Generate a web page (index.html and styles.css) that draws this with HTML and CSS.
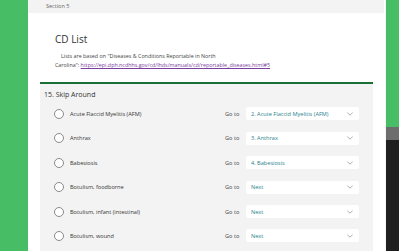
FILE: index.html
```html
<!DOCTYPE html>
<html>
<head>
    <title>CD List - Skip Around</title>
    <link rel="stylesheet" href="styles.css">
</head>
<body>
    <div class="page">
        <div class="rail"></div>

        <main class="form">
            <div class="section-bar">Section 5</div>

            <div class="intro">
                <h1 class="intro-title">CD List</h1>
                <p class="intro-text">
                    <span class="indent">Lists are based on "Diseases &amp; Conditions Reportable in North</span><br>
                    Carolina": <a href="#">https://epi.dph.ncdhhs.gov/cd/lhds/manuals/cd/reportable_diseases.html#5</a>
                </p>
            </div>

            <div class="question">
                <div class="q-title">15. Skip Around</div>

                <div class="option">
                    <span class="radio"></span>
                    <span class="label">Acute Flaccid Myelitis (AFM)</span>
                    <span class="goto">Go to</span>
                    <div class="select"><span>2. Acute Flaccid Myelitis (AFM)</span><svg class="chev" viewBox="0 0 8 5"><path d="M0.5 0.8 L4 4 L7.5 0.8"/></svg></div>
                </div>
                <div class="option">
                    <span class="radio"></span>
                    <span class="label">Anthrax</span>
                    <span class="goto">Go to</span>
                    <div class="select"><span>3. Anthrax</span><svg class="chev" viewBox="0 0 8 5"><path d="M0.5 0.8 L4 4 L7.5 0.8"/></svg></div>
                </div>
                <div class="option">
                    <span class="radio"></span>
                    <span class="label">Babesiosis</span>
                    <span class="goto">Go to</span>
                    <div class="select"><span>4. Babesiosis</span><svg class="chev" viewBox="0 0 8 5"><path d="M0.5 0.8 L4 4 L7.5 0.8"/></svg></div>
                </div>
                <div class="option">
                    <span class="radio"></span>
                    <span class="label">Botulism, foodborne</span>
                    <span class="goto">Go to</span>
                    <div class="select"><span>Next</span><svg class="chev" viewBox="0 0 8 5"><path d="M0.5 0.8 L4 4 L7.5 0.8"/></svg></div>
                </div>
                <div class="option">
                    <span class="radio"></span>
                    <span class="label">Botulism, infant (intestinal)</span>
                    <span class="goto">Go to</span>
                    <div class="select"><span>Next</span><svg class="chev" viewBox="0 0 8 5"><path d="M0.5 0.8 L4 4 L7.5 0.8"/></svg></div>
                </div>
                <div class="option">
                    <span class="radio"></span>
                    <span class="label">Botulism, wound</span>
                    <span class="goto">Go to</span>
                    <div class="select"><span>Next</span><svg class="chev" viewBox="0 0 8 5"><path d="M0.5 0.8 L4 4 L7.5 0.8"/></svg></div>
                </div>
            </div>
        </main>

        <div class="side">
            <div class="side-green"></div>
            <div class="side-gray"></div>
            <div class="side-dark"></div>
        </div>
    </div>
</body>
</html>
```

FILE: styles.css
```css
html, body {
    margin: 0;
    padding: 0;
}

body {
    font-family: "Open Sans", "Noto Sans", sans-serif;
    color: #333;
    overflow: hidden;
}

.page {
    display: flex;
    height: 251px;
    overflow: hidden;
}

.rail {
    width: 28px;
    background: #47be65;
    flex-shrink: 0;
}

.form {
    width: 357px;
    flex-shrink: 0;
    background: #fff;
    display: flex;
    flex-direction: column;
}

.section-bar {
    height: 13px;
    margin-right: 1px;
    background: #f3f3f3;
    font-size: 5.5px;
    line-height: 13px;
    color: #666;
    padding-left: 18px;
}

.intro {
    padding: 19px 0 0 27px;
    height: 50px;
}

.intro-title {
    margin: 0;
    font-size: 10px;
    font-weight: normal;
    line-height: 15px;
    color: #333;
}

.intro-text {
    margin: 5px 0 0;
    font-size: 5.35px;
    line-height: 9px;
    color: #444;
}

.indent {
    padding-left: 6px;
}

.intro-text a {
    color: #7a3e9d;
    text-decoration: underline;
}

.question {
    margin: 0 12px 0 12px;
    border-top: 2px solid #1b6e34;
    background: #f3f3f3;
    flex: 1;
    padding: 6px 0 0 4px;
}

.q-title {
    font-size: 7px;
    line-height: 10px;
    color: #333;
    margin-bottom: 1.8px;
}

.option {
    display: flex;
    align-items: center;
    height: 24.4px;
    font-size: 5.6px;
}

.radio {
    width: 8px;
    height: 8px;
    border: 1px solid #8a8a8a;
    border-radius: 50%;
    background: #fff;
    margin-left: 10px;
    flex-shrink: 0;
}

.label {
    margin-left: 6px;
    width: 155px;
    color: #333;
}

.goto {
    width: 21px;
    color: #444;
}

.select {
    width: 113px;
    height: 13px;
    background: #fff;
    border-radius: 2px;
    display: flex;
    align-items: center;
    justify-content: space-between;
    padding: 0 5px;
    box-sizing: border-box;
    color: #1f7f8c;
}

.chev {
    width: 6px;
    height: 4px;
    fill: none;
    stroke: #777;
    stroke-width: 0.8;
    margin-right: 1px;
}

.side {
    width: 14px;
    flex-shrink: 0;
    display: flex;
    flex-direction: column;
    border-left: 1px solid #f6f6f6;
}

.side-green {
    height: 127px;
    background: #47be65;
}

.side-gray {
    height: 13px;
    background: #6d6d6d;
}

.side-dark {
    flex: 1;
    background: #1f1f1f;
}
```
